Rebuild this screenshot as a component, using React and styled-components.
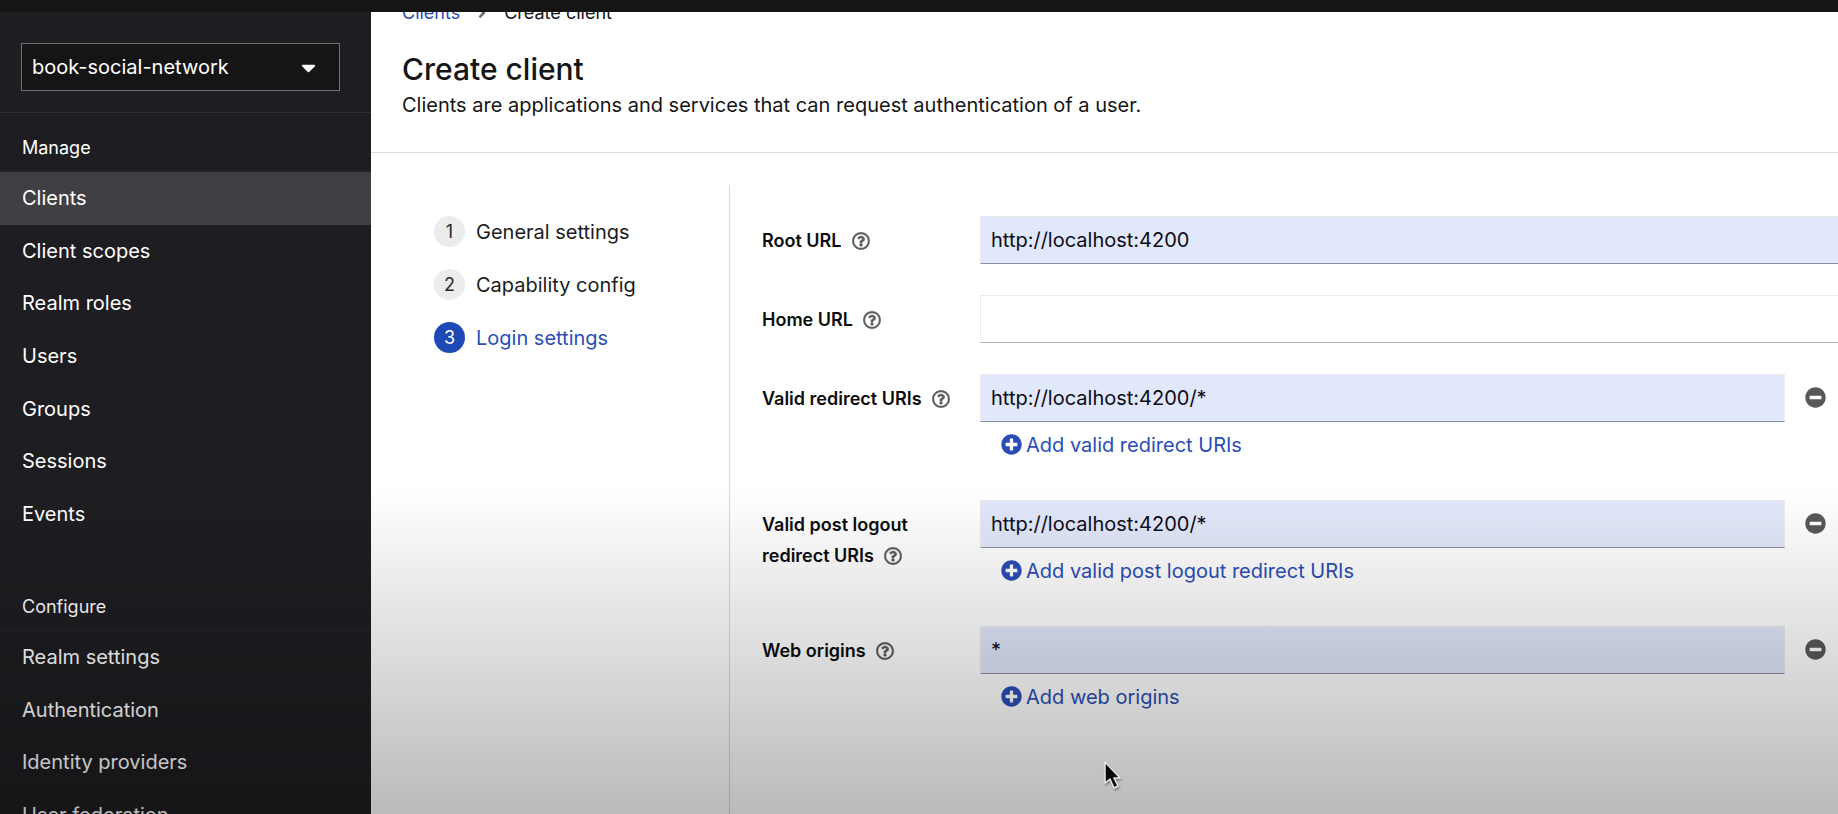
import React from "react";
import styled, { createGlobalStyle } from "styled-components";
import {
  FaAngleRight,
  FaCaretDown,
  FaMinusCircle,
  FaPlusCircle,
  FaRegQuestionCircle,
} from "react-icons/fa";

const GlobalStyle = createGlobalStyle`
  *, *::before, *::after { box-sizing: border-box; }
  html, body, #root { height: 100%; }
  body {
    margin: 0;
    overflow: hidden;
    background: #fff;
    color: #151515;
    font-family: Inter, "Liberation Sans", sans-serif;
    font-size: 20px;
  }
  button, input, select { font: inherit; color: inherit; }
  a { color: inherit; text-decoration: none; }
  ul, ol { list-style: none; margin: 0; padding: 0; }
`;

const Page = styled.div`
  position: relative;
  display: flex;
  flex-direction: column;
  height: 100vh;
  overflow: hidden;
`;

const TopBar = styled.div`
  flex: none;
  height: 12px;
  background: #151515;
`;

const Body = styled.div`
  flex: 1;
  min-height: 0;
  display: flex;
`;

const Sidebar = styled.nav`
  flex: none;
  width: 371px;
  overflow: hidden;
  background: #1e1d21;
  color: #fff;
`;

const RealmPicker = styled.div`
  padding: 31px 31px 21px 21px;
`;

const RealmField = styled.label`
  display: grid;
  align-items: center;

  > * { grid-area: 1 / 1; }
  > svg {
    justify-self: end;
    margin-right: 20px;
    pointer-events: none;
  }
`;

const RealmSelect = styled.select`
  appearance: none;
  width: 100%;
  height: 48px;
  padding: 0 48px 0 10px;
  border: 1px solid #707073;
  border-radius: 0;
  background: #151515;
`;

const SectionTitle = styled.h2`
  margin: ${(p) => (p.$spaced ? "32px" : "0")} 0 0;
  padding: 23px 22px 11px;
  border-bottom: 1px solid #26252a;
  font-size: 18px;
  font-weight: 400;
  line-height: 24px;
`;

const RealmDivider = styled.hr`
  margin: 0;
  border: 0;
  border-top: 1px solid #2f2e33;
`;

const NavList = styled.ul`
  display: grid;
  grid-auto-rows: 1fr;
  height: ${(p) => p.$height}px;
`;

const NavLink = styled.a`
  display: flex;
  align-items: center;
  height: 100%;
  padding: 0 22px;
  background: ${(p) => (p.$active ? "#403f43" : "transparent")};
`;

const Main = styled.main`
  flex: 1;
  min-width: 0;
  display: flex;
  flex-direction: column;
  overflow: hidden;
  background: #fff;
`;

const Header = styled.header`
  flex: none;
  padding: 0 31px 32px;
  border-bottom: 1px solid #dcdcdc;
`;

const Breadcrumb = styled.ol`
  display: flex;
  align-items: center;
  gap: 14px;
  margin-top: -11px;
  font-size: 18px;
  line-height: 24px;

  a { color: #2f4bb0; }
  li { display: flex; align-items: center; gap: 14px; }
  svg { display: block; color: #6a6e73; }
`;

const Title = styled.h1`
  margin: 25px 0 0;
  font-size: 30px;
  font-weight: 500;
  line-height: 38px;
`;

const Description = styled.p`
  margin: 2px 0 0;
  line-height: 30px;
`;

const Wizard = styled.div`
  flex: 1;
  display: flex;
  margin-top: 32px;
`;

const Steps = styled.ol`
  flex: none;
  display: flex;
  flex-direction: column;
  gap: 22px;
  width: 359px;
  padding: 31px 0 0 63px;
  border-right: 1px solid #d8d8d8;
`;

const StepButton = styled.button`
  display: flex;
  align-items: center;
  gap: 11px;
  height: 31px;
  padding: 0;
  border: 0;
  background: none;
  color: ${(p) => (p.$current ? "#2b4db8" : "#1c1c1c")};
`;

const StepNumber = styled.span`
  display: grid;
  place-items: center;
  width: 31px;
  height: 31px;
  border-radius: 50%;
  font-size: 18px;
  background: ${(p) => (p.$current ? "#1f49b6" : "#ececec")};
  color: ${(p) => (p.$current ? "#fff" : "#2a2a2a")};
`;

const Form = styled.form`
  flex: 1;
  min-width: 0;
  display: flex;
  flex-direction: column;
  gap: 31px;
  padding: 31px 0 0 32px;
`;

const FormRow = styled.div`
  display: grid;
  grid-template-columns: 218px 1fr;
`;

const LabelCell = styled.div`
  padding: 9px 24px 0 0;
  font-size: 18px;
  line-height: 31px;
  color: #0c0c0c;
`;

const Label = styled.label`
  font-weight: 600;
`;

const HelpButton = styled.button`
  margin-left: 6px;
  padding: 0 4px;
  border: 0;
  background: none;
  line-height: 18px;
  color: #5c5c5c;
  vertical-align: -3px;

  svg {
    display: block;
    stroke: currentColor;
    stroke-width: 12px;
  }
`;

const InputLine = styled.div`
  display: flex;
  align-items: center;
`;

const TextInput = styled.input`
  flex: 1;
  min-width: 0;
  height: 48px;
  padding: 0 10px;
  border: 1px solid #ececee;
  border-right-width: ${(p) => (p.$removable ? "1px" : "0")};
  border-bottom-color: ${(p) => (p.$filled ? "#8d90a4" : "#b4b4b4")};
  border-radius: 0;
  outline: 0;
  background: ${(p) => (p.$filled ? "#e2e8fb" : "#fff")};
  color: #0c0c18;
`;

const RemoveButton = styled.button`
  display: grid;
  place-items: center;
  flex: none;
  width: 53px;
  height: 48px;
  padding: 0 0 2px 8px;
  border: 0;
  background: none;
  color: #58585a;
`;

const AddButton = styled.button`
  display: flex;
  align-items: center;
  gap: 4px;
  height: 47px;
  padding: 0 21px 2px;
  border: 0;
  background: none;
  color: #2b4db8;
`;

const BottomShade = styled.div`
  position: absolute;
  inset: auto 0 0;
  height: 40%;
  background: linear-gradient(rgba(0, 0, 0, 0), rgba(0, 0, 0, 0.27));
  pointer-events: none;
`;

const Pointer = styled.svg`
  position: absolute;
  left: 60%;
  top: 758px;
  pointer-events: none;
  filter: drop-shadow(1px 2px 1px rgba(0, 0, 0, 0.3));
`;

const manageItems = [
  "Clients",
  "Client scopes",
  "Realm roles",
  "Users",
  "Groups",
  "Sessions",
  "Events",
];
const configureItems = [
  "Realm settings",
  "Authentication",
  "Identity providers",
  "User federation",
];
const steps = ["General settings", "Capability config", "Login settings"];
const fields = [
  { id: "root-url", label: "Root URL", value: "http://localhost:4200" },
  { id: "home-url", label: "Home URL", value: "" },
  {
    id: "redirect-uris",
    label: "Valid redirect URIs",
    value: "http://localhost:4200/*",
    add: "Add valid redirect URIs",
  },
  {
    id: "logout-uris",
    label: "Valid post logout redirect URIs",
    value: "http://localhost:4200/*",
    add: "Add valid post logout redirect URIs",
  },
  { id: "web-origins", label: "Web origins", value: "*", add: "Add web origins" },
];

function NavSection({ title, items, height, active, spaced }) {
  return (
    <section>
      <SectionTitle $spaced={spaced}>{title}</SectionTitle>
      <NavList $height={height}>
        {items.map((item) => (
          <li key={item}>
            <NavLink href="#" $active={item === active}>
              {item}
            </NavLink>
          </li>
        ))}
      </NavList>
    </section>
  );
}

function Field({ id, label, value, add }) {
  return (
    <FormRow>
      <LabelCell>
        <Label htmlFor={id}>{label}</Label>
        <HelpButton type="button" aria-label={`Help for ${label}`}>
          <FaRegQuestionCircle size={18} />
        </HelpButton>
      </LabelCell>
      <div>
        <InputLine>
          <TextInput
            id={id}
            type="text"
            defaultValue={value}
            $filled={value !== ""}
            $removable={Boolean(add)}
          />
          {add && (
            <RemoveButton type="button" aria-label="Remove">
              <FaMinusCircle size={21} />
            </RemoveButton>
          )}
        </InputLine>
        {add && (
          <AddButton type="button">
            <FaPlusCircle size={21} />
            {add}
          </AddButton>
        )}
      </div>
    </FormRow>
  );
}

export default function App() {
  return (
    <Page>
      <GlobalStyle />
      <TopBar />
      <Body>
        <Sidebar>
          <RealmPicker>
            <RealmField>
              <RealmSelect aria-label="Realm" defaultValue="book-social-network">
                <option>book-social-network</option>
              </RealmSelect>
              <FaCaretDown size={23} />
            </RealmField>
          </RealmPicker>
          <RealmDivider />
          <NavSection title="Manage" items={manageItems} height={368} active="Clients" />
          <NavSection title="Configure" items={configureItems} height={210} spaced />
        </Sidebar>
        <Main>
          <Header>
            <Breadcrumb>
              <li>
                <a href="#">Clients</a>
                <FaAngleRight size={16} />
              </li>
              <li>Create client</li>
            </Breadcrumb>
            <Title>Create client</Title>
            <Description>
              Clients are applications and services that can request authentication of a user.
            </Description>
          </Header>
          <Wizard>
            <Steps>
              {steps.map((step, i) => (
                <li key={step}>
                  <StepButton type="button" $current={i === 2}>
                    <StepNumber $current={i === 2}>{i + 1}</StepNumber>
                    {step}
                  </StepButton>
                </li>
              ))}
            </Steps>
            <Form>
              {fields.map((field) => (
                <Field key={field.id} {...field} />
              ))}
            </Form>
          </Wizard>
        </Main>
      </Body>
      <BottomShade />
      <Pointer width="22" height="34" viewBox="0 0 22 34" aria-hidden="true">
        <path
          d="M2 4v21l5-4 4 9 4-2-4-8h6z"
          fill="#0a0a0a"
          stroke="#e8e8e8"
          strokeWidth="1.5"
          strokeLinejoin="round"
        />
      </Pointer>
    </Page>
  );
}
